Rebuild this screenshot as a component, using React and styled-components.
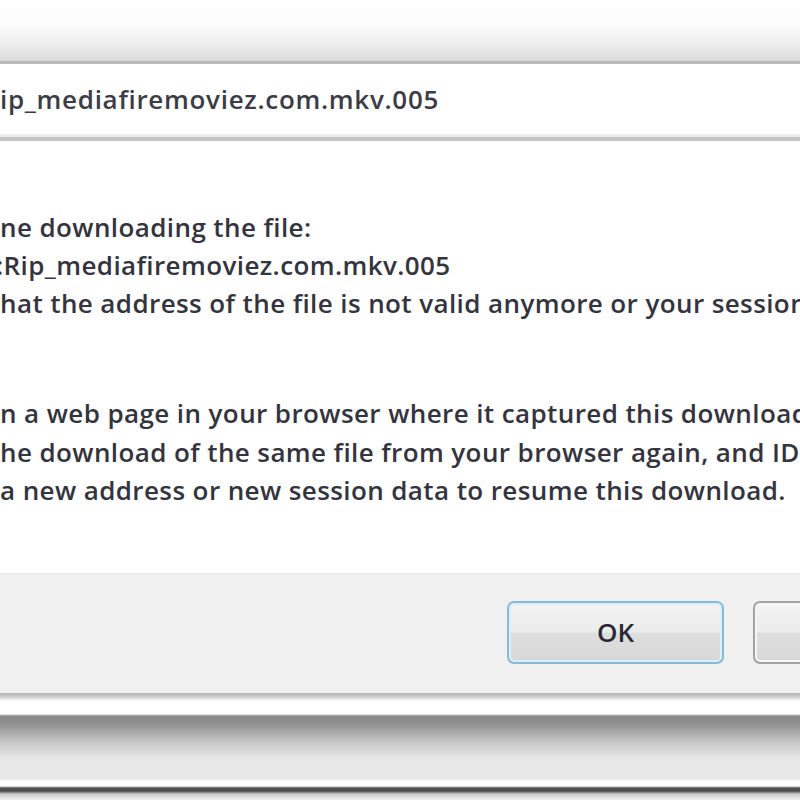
import React from "react";
import { styled, createGlobalStyle } from "styled-components";

const GlobalStyle = createGlobalStyle`
  html, body {
    margin: 0;
    padding: 0;
    background: #ffffff;
    overflow: hidden;
  }
  body {
    font-family: "Open Sans", "Noto Sans", sans-serif;
    color: #2f2f35;
  }
`;

const Dialog = styled.div`
  width: 800px;
  height: 800px;
  display: flex;
  flex-direction: column;
  background: #ffffff;
  overflow: hidden;
`;

const TitleStrip = styled.div`
  height: 61px;
  background: linear-gradient(
    to bottom,
    #ffffff 0%,
    #fcfcfc 40%,
    #ececec 75%,
    #dadada 100%
  );
`;

const FileField = styled.div`
  height: 70px;
  border-top: 3px solid #b9b9b9;
  border-bottom: 4px solid #c4c4c4;
  box-shadow: inset 0 -3px 0 #ededed;
  background: #ffffff;
  display: flex;
  align-items: center;
  padding: 0 0 3px;
  font-size: 26px;
  font-weight: 600;
  letter-spacing: 0.7px;
  white-space: nowrap;
  overflow: hidden;
  color: #3c3c46;
`;

const Body = styled.div`
  flex: 1;
  display: flex;
  flex-direction: column;
  gap: 70px;
  padding-top: 67px;
  background: #ffffff;
  overflow: hidden;
`;

const Paragraph = styled.div`
  display: flex;
  flex-direction: column;
`;

const Line = styled.div`
  font-size: 26px;
  font-weight: 600;
  line-height: ${(p) => p.$lh || 38}px;
  white-space: nowrap;
  letter-spacing: 0.4px;
  color: #34343e;
  margin-left: ${(p) => p.$indent || 0}px;
`;

const Footer = styled.div`
  height: 120px;
  background: #f0f0f0;
  border-top: 1px solid #e9e9e9;
  display: flex;
  align-items: center;
  gap: 29px;
  padding-left: 507px;
  box-sizing: border-box;
  overflow: hidden;
`;

const Button = styled.button`
  flex: none;
  width: 217px;
  height: 63px;
  margin-top: -2px;
  border-radius: 7px;
  border: 2px solid ${(p) => (p.$default ? "#86bcd6" : "#a3a3a3")};
  box-shadow: inset 0 0 0 2px ${(p) => (p.$default ? "#d9eef7" : "#f6f6f6")};
  background: linear-gradient(
    to bottom,
    #f4f4f4 0%,
    #ececec 48%,
    #dedede 52%,
    #d7d7d7 100%
  );
  font-family: "Open Sans", "Noto Sans", sans-serif;
  font-size: 26px;
  font-weight: 600;
  color: #2a2a34;
  padding: 0 0 2px;
`;

// window frame edge under the dialog: separator, shadow band and dark rim
const FrameBottom = styled.div`
  height: 107px;
  background: linear-gradient(
    to bottom,
    #b4b4b4 0px,
    #d8d8d8 5px,
    #ffffff 8px,
    #ffffff 21px,
    #8a8a8a 23px,
    #8e8e8e 30px,
    #c9c9c9 50px,
    #e6e6e6 65px,
    #e8e8e8 86px,
    #ffffff 88px,
    #ffffff 93px,
    #555555 95px,
    #4a4a4a 98px,
    #c8c8c8 101px,
    #f2f2f2 107px
  );
`;

export default function App() {
  return (
    <>
      <GlobalStyle />
      <Dialog>
        <TitleStrip />
        <FileField>ip_mediafiremoviez.com.mkv.005</FileField>
        <Body>
          <Paragraph>
            <Line>ne downloading the file:</Line>
            <Line $indent={-4}>:Rip_mediafiremoviez.com.mkv.005</Line>
            <Line $lh={39}>hat the address of the file is not valid anymore or your session has expired.</Line>
          </Paragraph>
          <Paragraph>
            <Line $lh={40}>n a web page in your browser where it captured this download from</Line>
            <Line $lh={38}>he download of the same file from your browser again, and IDM will</Line>
            <Line $lh={38}>a new address or new session data to resume this download.</Line>
          </Paragraph>
        </Body>
        <Footer>
          <Button $default>OK</Button>
          <Button>Cancel</Button>
        </Footer>
        <FrameBottom />
      </Dialog>
    </>
  );
}
